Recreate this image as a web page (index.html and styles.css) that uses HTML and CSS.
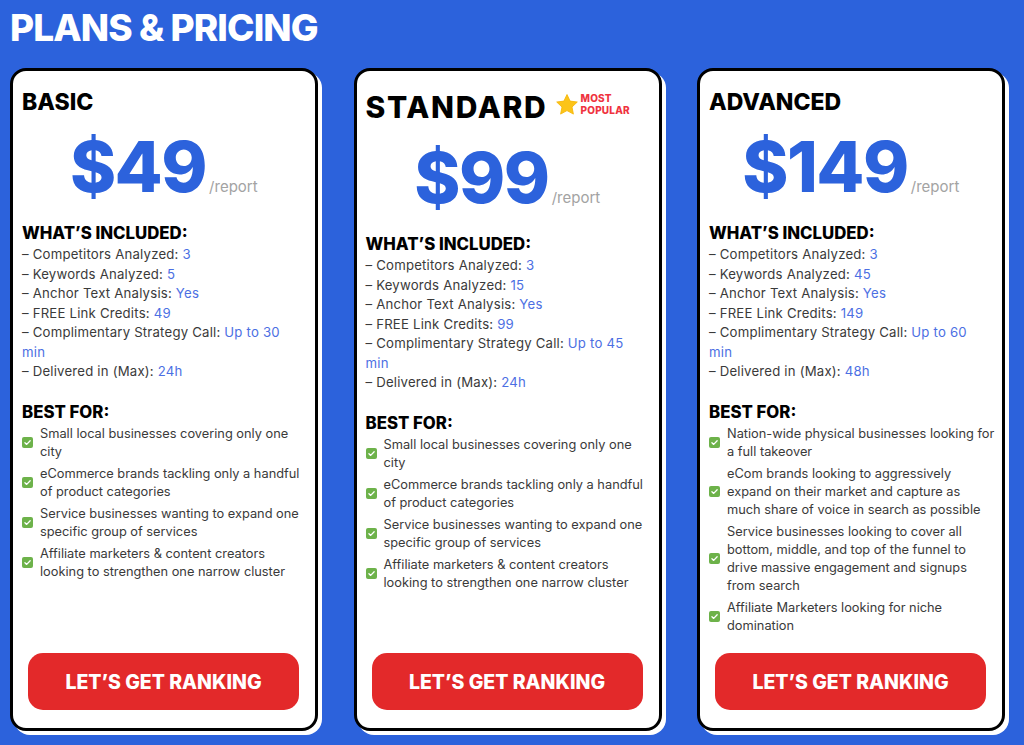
FILE: index.html
```html
<!DOCTYPE html>
<html lang="en">
<head>
<meta charset="utf-8">
<title>Plans &amp; Pricing</title>
<link rel="stylesheet" href="styles.css">
</head>
<body>
<h1 class="title">PLANS &amp; PRICING</h1>
<div class="cards">
  <div class="card">
    <h2 class="plan">BASIC</h2>
    <div class="price"><span class="amount">$49</span><span class="per">/report</span></div>
    <h3 class="section">WHAT’S INCLUDED:</h3>
    <ul class="included">
      <li>– Competitors Analyzed: <span class="val">3</span></li>
      <li>– Keywords Analyzed: <span class="val">5</span></li>
      <li>– Anchor Text Analysis: <span class="val">Yes</span></li>
      <li>– FREE Link Credits: <span class="val">49</span></li>
      <li>– Complimentary Strategy Call: <span class="val">Up to 30 min</span></li>
      <li>– Delivered in (Max): <span class="val">24h</span></li>
    </ul>
    <h3 class="section best">BEST FOR:</h3>
    <ul class="checks">
      <li><span class="chk"><svg viewBox="0 0 12 12"><path d="M3.2 6.2l1.9 1.9 3.8-4" fill="none" stroke="#fff" stroke-width="1.4" stroke-linecap="round" stroke-linejoin="round"/></svg></span><span>Small local businesses covering only one city</span></li>
      <li><span class="chk"><svg viewBox="0 0 12 12"><path d="M3.2 6.2l1.9 1.9 3.8-4" fill="none" stroke="#fff" stroke-width="1.4" stroke-linecap="round" stroke-linejoin="round"/></svg></span><span>eCommerce brands tackling only a handful of product categories</span></li>
      <li><span class="chk"><svg viewBox="0 0 12 12"><path d="M3.2 6.2l1.9 1.9 3.8-4" fill="none" stroke="#fff" stroke-width="1.4" stroke-linecap="round" stroke-linejoin="round"/></svg></span><span>Service businesses wanting to expand one specific group of services</span></li>
      <li><span class="chk"><svg viewBox="0 0 12 12"><path d="M3.2 6.2l1.9 1.9 3.8-4" fill="none" stroke="#fff" stroke-width="1.4" stroke-linecap="round" stroke-linejoin="round"/></svg></span><span>Affiliate marketers &amp; content creators looking to strengthen one narrow cluster</span></li>
    </ul>
    <a class="btn" href="#">LET’S GET RANKING</a>
  </div>

  <div class="card">
    <div class="plan-row">
      <h2 class="plan big">STANDARD</h2>
      <svg class="star" viewBox="0 0 24 24"><path d="M12 1.5l3.1 6.6 7.2.9-5.3 5 1.4 7.1L12 17.6l-6.4 3.5 1.4-7.1-5.3-5 7.2-.9z" fill="#fcc419" stroke="#f5b400" stroke-width="0.8" stroke-linejoin="round"/></svg>
      <span class="popular">MOST<br>POPULAR</span>
    </div>
    <div class="price"><span class="amount">$99</span><span class="per">/report</span></div>
    <h3 class="section">WHAT’S INCLUDED:</h3>
    <ul class="included">
      <li>– Competitors Analyzed: <span class="val">3</span></li>
      <li>– Keywords Analyzed: <span class="val">15</span></li>
      <li>– Anchor Text Analysis: <span class="val">Yes</span></li>
      <li>– FREE Link Credits: <span class="val">99</span></li>
      <li>– Complimentary Strategy Call: <span class="val">Up to 45 min</span></li>
      <li>– Delivered in (Max): <span class="val">24h</span></li>
    </ul>
    <h3 class="section best">BEST FOR:</h3>
    <ul class="checks">
      <li><span class="chk"><svg viewBox="0 0 12 12"><path d="M3.2 6.2l1.9 1.9 3.8-4" fill="none" stroke="#fff" stroke-width="1.4" stroke-linecap="round" stroke-linejoin="round"/></svg></span><span>Small local businesses covering only one city</span></li>
      <li><span class="chk"><svg viewBox="0 0 12 12"><path d="M3.2 6.2l1.9 1.9 3.8-4" fill="none" stroke="#fff" stroke-width="1.4" stroke-linecap="round" stroke-linejoin="round"/></svg></span><span>eCommerce brands tackling only a handful of product categories</span></li>
      <li><span class="chk"><svg viewBox="0 0 12 12"><path d="M3.2 6.2l1.9 1.9 3.8-4" fill="none" stroke="#fff" stroke-width="1.4" stroke-linecap="round" stroke-linejoin="round"/></svg></span><span>Service businesses wanting to expand one specific group of services</span></li>
      <li><span class="chk"><svg viewBox="0 0 12 12"><path d="M3.2 6.2l1.9 1.9 3.8-4" fill="none" stroke="#fff" stroke-width="1.4" stroke-linecap="round" stroke-linejoin="round"/></svg></span><span>Affiliate marketers &amp; content creators looking to strengthen one narrow cluster</span></li>
    </ul>
    <a class="btn" href="#">LET’S GET RANKING</a>
  </div>

  <div class="card">
    <h2 class="plan">ADVANCED</h2>
    <div class="price"><span class="amount">$149</span><span class="per">/report</span></div>
    <h3 class="section">WHAT’S INCLUDED:</h3>
    <ul class="included">
      <li>– Competitors Analyzed: <span class="val">3</span></li>
      <li>– Keywords Analyzed: <span class="val">45</span></li>
      <li>– Anchor Text Analysis: <span class="val">Yes</span></li>
      <li>– FREE Link Credits: <span class="val">149</span></li>
      <li>– Complimentary Strategy Call: <span class="val">Up to 60 min</span></li>
      <li>– Delivered in (Max): <span class="val">48h</span></li>
    </ul>
    <h3 class="section best">BEST FOR:</h3>
    <ul class="checks">
      <li><span class="chk"><svg viewBox="0 0 12 12"><path d="M3.2 6.2l1.9 1.9 3.8-4" fill="none" stroke="#fff" stroke-width="1.4" stroke-linecap="round" stroke-linejoin="round"/></svg></span><span>Nation-wide physical businesses looking for a full takeover</span></li>
      <li><span class="chk"><svg viewBox="0 0 12 12"><path d="M3.2 6.2l1.9 1.9 3.8-4" fill="none" stroke="#fff" stroke-width="1.4" stroke-linecap="round" stroke-linejoin="round"/></svg></span><span>eCom brands looking to aggressively expand on their market and capture as much share of voice in search as possible</span></li>
      <li><span class="chk"><svg viewBox="0 0 12 12"><path d="M3.2 6.2l1.9 1.9 3.8-4" fill="none" stroke="#fff" stroke-width="1.4" stroke-linecap="round" stroke-linejoin="round"/></svg></span><span>Service businesses looking to cover all bottom, middle, and top of the funnel to drive massive engagement and signups from search</span></li>
      <li><span class="chk"><svg viewBox="0 0 12 12"><path d="M3.2 6.2l1.9 1.9 3.8-4" fill="none" stroke="#fff" stroke-width="1.4" stroke-linecap="round" stroke-linejoin="round"/></svg></span><span>Affiliate Marketers looking for niche domination</span></li>
    </ul>
    <a class="btn" href="#">LET’S GET RANKING</a>
  </div>
</div>
</body>
</html>
```

FILE: styles.css
```css
* { box-sizing: border-box; }

html, body {
  margin: 0;
  padding: 0;
}

body {
  background: #2c62dc;
  font-family: "Inter", "Open Sans", sans-serif;
  color: #333;
  width: 1024px;
  height: 745px;
  overflow: hidden;
}

.title {
  margin: 0;
  padding: 8px 10px 0;
  font-size: 37px;
  line-height: 40px;
  font-weight: 800;
  color: #fff;
  letter-spacing: -0.9px;
}

.cards {
  display: grid;
  grid-template-columns: 308px 308px 308px;
  column-gap: 35.5px;
  padding-left: 10px;
  margin-top: 20px;
}

.card {
  height: 663px;
  background: #fff;
  border: 3px solid #000;
  border-radius: 16px;
  box-shadow: 4px 4px 0 #fff;
  padding: 16px 7.5px 18px 9px;
  display: flex;
  flex-direction: column;
}

.plan {
  margin: 0;
  font-size: 23px;
  line-height: 30px;
  font-weight: 800;
  color: #000;
}

.plan-row {
  display: flex;
  align-items: center;
  height: 41px;
}

.plan.big {
  font-size: 30px;
  line-height: 41px;
  letter-spacing: 1.7px;
}

.star {
  width: 24px;
  height: 24px;
  margin-left: 7px;
  margin-top: -6px;
}

.popular {
  font-size: 10px;
  line-height: 11.5px;
  font-weight: 800;
  color: #ef3340;
  margin-left: 2px;
  margin-top: -6px;
  letter-spacing: 0.2px;
}

.price {
  display: flex;
  justify-content: center;
  align-items: baseline;
  margin-top: 15px;
  margin-right: 2px;
}

.amount {
  font-size: 70px;
  line-height: 70px;
  font-weight: 800;
  color: #2c62dc;
  letter-spacing: -1.5px;
}

.per {
  font-size: 15px;
  color: #a3a3a3;
  margin-left: 3px;
}

.section {
  margin: 19px 0 0;
  font-size: 16.8px;
  line-height: 24px;
  font-weight: 800;
  color: #000;
}

.section.best {
  margin-top: 18px;
}

.included {
  list-style: none;
  margin: 0 2.5px 0 0;
  padding: 0;
  font-size: 13.2px;
  line-height: 19.5px;
  letter-spacing: 0.2px;
  color: #3a3a3a;
}

.val {
  color: #4c6fe3;
}

.checks {
  list-style: none;
  margin: 1px 0 0;
  padding: 0;
  font-size: 12.8px;
  line-height: 18px;
  letter-spacing: 0;
  color: #3a3a3a;
  display: flex;
  flex-direction: column;
  gap: 4px;
}

.checks li {
  display: flex;
  align-items: center;
  gap: 7px;
}

.chk {
  flex: 0 0 11px;
  width: 11px;
  height: 11px;
  border-radius: 2px;
  background: #6db24a;
  display: flex;
}

.chk svg {
  width: 11px;
  height: 11px;
}

.btn {
  margin: auto 8.5px 0 6px;
  height: 57px;
  border-radius: 15px;
  background: #e3292a;
  color: #fff;
  font-size: 19.5px;
  font-weight: 800;
  text-decoration: none;
  display: flex;
  align-items: center;
  justify-content: center;
  letter-spacing: 0;
}
```
